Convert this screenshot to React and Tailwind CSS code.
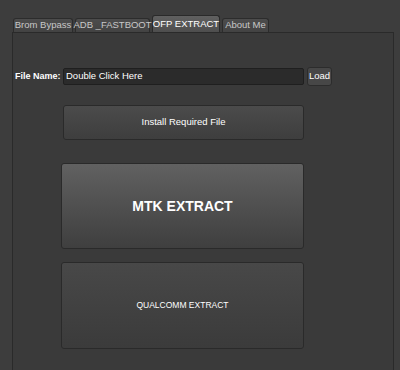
function Tab({ label, active, className }) {
  if (active) {
    return (
      <div className={"h-[17px] flex shrink-0 items-center justify-center whitespace-nowrap rounded-t-[3px] bg-gradient-to-b from-[#606060] to-[#4e4e4e] border border-b-0 border-[#2a2a2a] text-[9.5px] text-white " + className}>
        {label}
      </div>
    );
  }
  return (
    <div className={"h-[14px] flex shrink-0 items-center justify-center whitespace-nowrap rounded-t-[3px] bg-gradient-to-b from-[#4c4c4c] to-[#434343] border border-b-0 border-[#2c2c2c] text-[9.5px] text-[#c8c8c8] " + className}>
      {label}
    </div>
  );
}

function App() {
  return (
    <div
      className="w-[400px] h-[370px] bg-[#3d3d3d] overflow-hidden text-[#e8e8e8]"
      style={{ fontFamily: '"Liberation Sans", Arial, sans-serif' }}
    >
      <div className="flex items-end pl-[13px] pt-[15px] h-[32px] gap-[2px]">
        <Tab label="Brom Bypass" className="w-[60px]" />
        <Tab label="ADB _FASTBOOT" className="w-[75px]" />
        <Tab label="OFP EXTRACT" className="w-[68px]" active />
        <Tab label="About Me" className="w-[47px]" />
      </div>

      <div className="ml-[12px] w-[382px] h-[340px] border border-[#2a2a2a] bg-[#3a3a3a]">
        <div className="flex items-center mt-[34px] pl-[2px]">
          <span className="whitespace-nowrap text-[9px] font-bold text-white w-[48px]">File Name:</span>
          <div className="w-[241px] h-[17px] bg-[#2b2b2b] border border-[#1f1f1f] rounded-[2px] text-[9.5px] text-white flex items-center pl-[2px]">
            Double Click Here
          </div>
          <div className="ml-[3px] w-[25px] h-[19px] rounded-[3px] bg-[#474747] border border-[#2c2c2c] text-[9.5px] text-white flex items-center justify-center">
            Load
          </div>
        </div>

        <div className="ml-[50px] mt-[19px] w-[241px] h-[35px] rounded-[3px] border border-[#2a2a2a] bg-gradient-to-b from-[#4b4b4b] to-[#3e3e3e] flex items-center justify-center text-[9.5px] text-white">
          Install Required File
        </div>

        <div className="ml-[48px] mt-[23px] w-[243px] h-[86px] rounded-[3px] border border-[#2a2a2a] bg-gradient-to-b from-[#616161] to-[#3f3f3f] flex items-center justify-center text-[14px] font-bold text-white">
          MTK EXTRACT
        </div>

        <div className="ml-[48px] mt-[13px] w-[243px] h-[87px] rounded-[3px] border border-[#2a2a2a] bg-gradient-to-b from-[#484848] to-[#3b3b3b] flex items-center justify-center text-[8.5px] text-white">
          QUALCOMM EXTRACT
        </div>
      </div>
    </div>
  );
}

export default App;
